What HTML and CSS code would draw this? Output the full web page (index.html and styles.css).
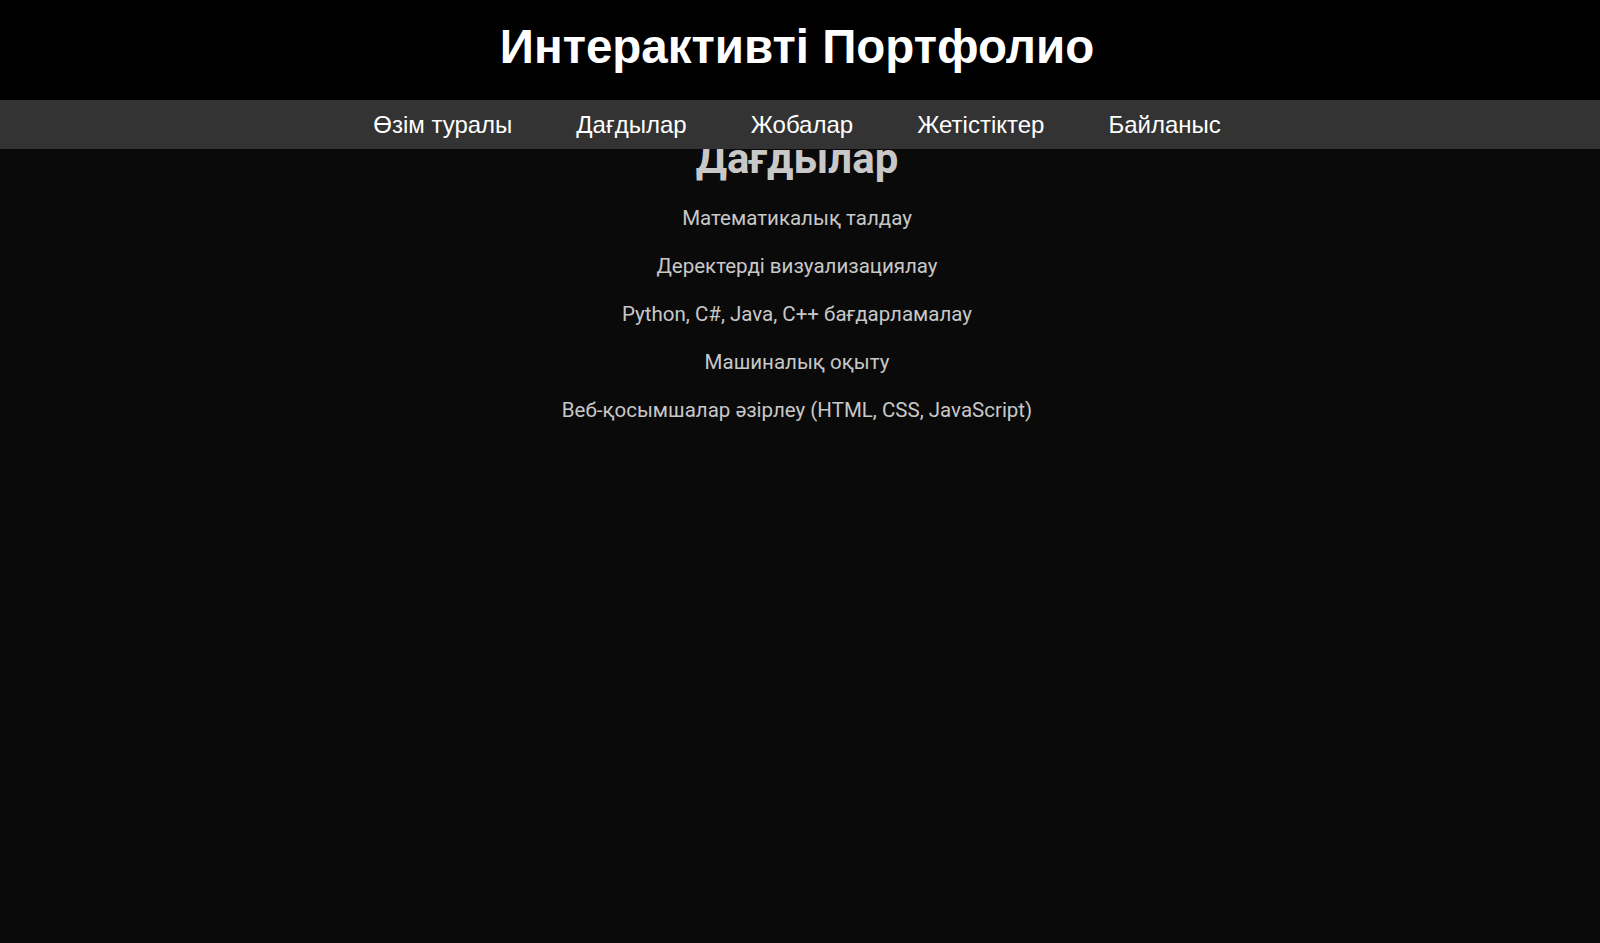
FILE: index.html
```html
<!DOCTYPE html>
<html lang="kk">
<head>
<meta charset="utf-8">
<title>Интерактивті Портфолио</title>
<link rel="stylesheet" href="styles.css">
</head>
<body>
<header class="site-header">
  <h1 class="site-title">Интерактивті Портфолио</h1>
</header>
<nav class="site-nav">
  <a class="nav-link" href="#about">Өзім туралы</a>
  <a class="nav-link" href="#skills">Дағдылар</a>
  <a class="nav-link" href="#projects">Жобалар</a>
  <a class="nav-link" href="#achievements">Жетістіктер</a>
  <a class="nav-link" href="#contact">Байланыс</a>
</nav>
<main class="content">
  <section class="skills" id="skills">
    <h2 class="section-title">Дағдылар</h2>
    <p class="skill">Математикалық талдау</p>
    <p class="skill">Деректерді визуализациялау</p>
    <p class="skill">Python, C#, Java, C++ бағдарламалау</p>
    <p class="skill">Машиналық оқыту</p>
    <p class="skill">Веб-қосымшалар әзірлеу (HTML, CSS, JavaScript)</p>
  </section>
</main>
</body>
</html>
```
FILE: styles.css
```css
html, body {
  margin: 0;
  padding: 0;
  background: #0a0a0a;
  min-height: 100%;
}
body {
  font-family: Roboto, "Noto Sans", sans-serif;
  color: #c8c8c8;
}
.site-header {
  background: #000000;
  height: 100px;
  box-sizing: border-box;
  padding: 22px 6px 0 0;
  text-align: center;
}
.site-title {
  margin: 0;
  font-family: "Liberation Sans", Arial, sans-serif;
  font-weight: bold;
  font-size: 47.5px;
  line-height: 50px;
  color: #ffffff;
}
.site-nav {
  position: relative;
  z-index: 2;
  background: #333333;
  height: 49px;
  padding-right: 6px;
  display: flex;
  justify-content: center;
  align-items: center;
  gap: 64px;
}
.nav-link {
  font-family: "Liberation Sans", Arial, sans-serif;
  font-size: 24px;
  color: #ffffff;
  text-decoration: none;
}
.content {
  text-align: center;
  padding-right: 6px;
}
.skills {
  margin-top: -15px;
}
.section-title {
  margin: 0 0 20px;
  font-size: 42px;
  line-height: 50px;
  font-weight: bold;
  color: #c8c8c8;
}
.skill {
  margin: 0 0 20px;
  font-size: 20.5px;
  line-height: 28px;
}
```
